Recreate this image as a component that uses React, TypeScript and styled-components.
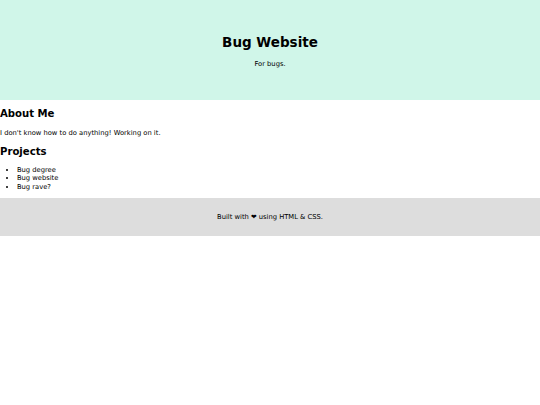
import React from "react";
import styled, { createGlobalStyle } from "styled-components";

const GlobalStyle = createGlobalStyle`
  html, body {
    margin: 0;
    padding: 0;
    background: #ffffff;
  }
  body {
    font-family: "DejaVu Sans", Verdana, sans-serif;
    font-size: 6.75px;
    line-height: 1.215;
    color: #000000;
  }
`;

const Header = styled.header`
  background: #d0f6e9;
  text-align: center;
  padding: 25.3px 0;
`;

const Title = styled.h1`
  font-size: 13.5px;
  font-weight: bold;
  margin: 9px 0;
`;

const Tagline = styled.p`
  margin: 6.75px 0;
`;

const Main = styled.main`
  display: block;
`;

const SectionTitle = styled.h2`
  font-size: 10.125px;
  font-weight: bold;
  margin: 8.4px 0;
`;

const Text = styled.p`
  margin: 6.75px 0;
`;

const List = styled.ul`
  margin: 6.75px 0;
  padding-left: 16.9px;
`;

const Item = styled.li``;

const Footer = styled.footer`
  background: #dddddd;
  text-align: center;
  padding: 8.5px 0;
`;

export default function App() {
  return (
    <>
      <GlobalStyle />
      <Header>
        <Title>Bug Website</Title>
        <Tagline>For bugs.</Tagline>
      </Header>
      <Main>
        <SectionTitle>About Me</SectionTitle>
        <Text>I don't know how to do anything! Working on it.</Text>
        <SectionTitle>Projects</SectionTitle>
        <List>
          <Item>Bug degree</Item>
          <Item>Bug website</Item>
          <Item>Bug rave?</Item>
        </List>
      </Main>
      <Footer>
        <Text>Built with ❤ using HTML &amp; CSS.</Text>
      </Footer>
    </>
  );
}
